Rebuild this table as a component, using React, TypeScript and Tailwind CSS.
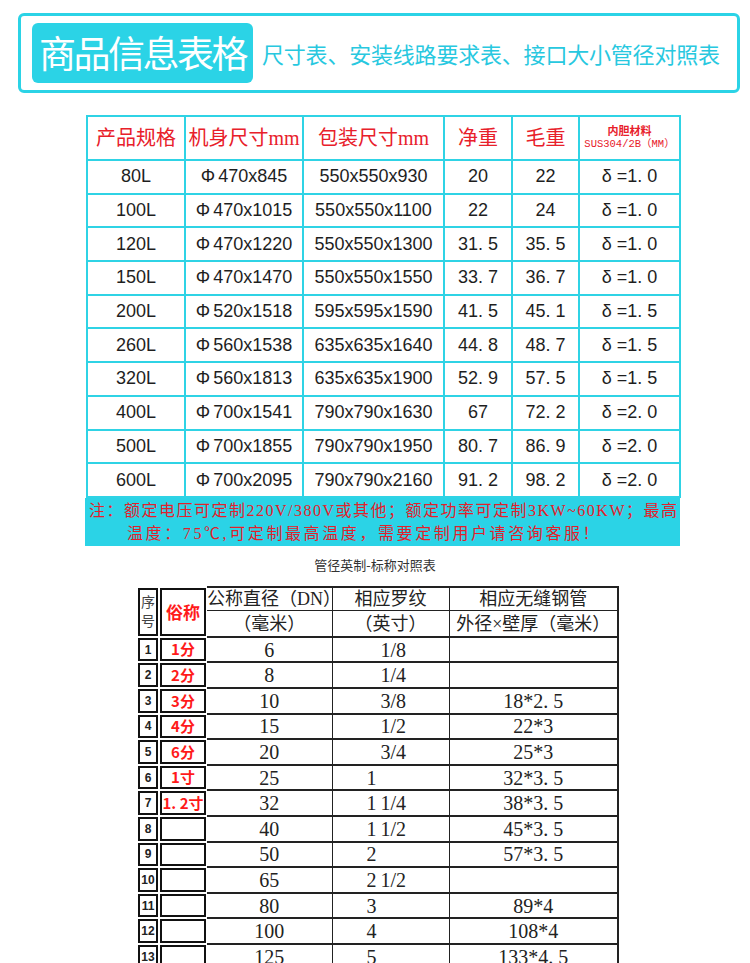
import React from 'react';

const specRows = [
  ['80L', 'Φ470x845', '550x550x930', '20', '22', 'δ =1. 0'],
  ['100L', 'Φ470x1015', '550x550x1100', '22', '24', 'δ =1. 0'],
  ['120L', 'Φ470x1220', '550x550x1300', '31. 5', '35. 5', 'δ =1. 0'],
  ['150L', 'Φ470x1470', '550x550x1550', '33. 7', '36. 7', 'δ =1. 0'],
  ['200L', 'Φ520x1518', '595x595x1590', '41. 5', '45. 1', 'δ =1. 5'],
  ['260L', 'Φ560x1538', '635x635x1640', '44. 8', '48. 7', 'δ =1. 5'],
  ['320L', 'Φ560x1813', '635x635x1900', '52. 9', '57. 5', 'δ =1. 5'],
  ['400L', 'Φ700x1541', '790x790x1630', '67', '72. 2', 'δ =2. 0'],
  ['500L', 'Φ700x1855', '790x790x1950', '80. 7', '86. 9', 'δ =2. 0'],
  ['600L', 'Φ700x2095', '790x790x2160', '91. 2', '98. 2', 'δ =2. 0'],
];

// [no, nickname, DN, inch (int part), inch (fraction), seamless pipe]
const pipeRows = [
  ['1', '1分', '6', '', '1/8', ''],
  ['2', '2分', '8', '', '1/4', ''],
  ['3', '3分', '10', '', '3/8', '18*2. 5'],
  ['4', '4分', '15', '', '1/2', '22*3'],
  ['5', '6分', '20', '', '3/4', '25*3'],
  ['6', '1寸', '25', '1', '', '32*3. 5'],
  ['7', '1. 2寸', '32', '1', '1/4', '38*3. 5'],
  ['8', '', '40', '1', '1/2', '45*3. 5'],
  ['9', '', '50', '2', '', '57*3. 5'],
  ['10', '', '65', '2', '1/2', ''],
  ['11', '', '80', '3', '', '89*4'],
  ['12', '', '100', '4', '', '108*4'],
  ['13', '', '125', '5', '', '133*4. 5'],
];

const sans = { fontFamily: '"Liberation Sans", "Noto Sans CJK SC", sans-serif' };
const serif = { fontFamily: '"Liberation Serif", "Noto Sans CJK SC", serif' };

const boxCell =
  'border-0 p-0 shadow-[inset_0_0_0_1px_#fff,inset_0_0_0_3px_#111] text-center';

export default function App() {
  return (
    <div className="w-[750px] h-[963px] overflow-hidden bg-white" style={sans}>
      {/* header banner */}
      <div className="ml-[18px] mt-[13px] w-[722px] h-[80px] border-[3px] border-[#2bd3e6] rounded-[6px] flex items-center">
        <div
          className="ml-[11px] w-[221px] h-[60px] bg-[#2bd3e6] rounded-[6px] flex items-center justify-center text-white text-[37px] tracking-[-2.5px]"
          style={{ fontFamily: '"Noto Sans CJK SC", sans-serif' }}
        >
          商品信息表格
        </div>
        <div
          className="ml-[9px] text-[22px] tracking-[-0.2px] text-[#28c8df]"
          style={{ fontFamily: '"Noto Sans CJK SC", sans-serif' }}
        >
          尺寸表、安装线路要求表、接口大小管径对照表
        </div>
      </div>

      {/* spec table */}
      <table className="ml-[86px] mt-[22px] w-[593px] table-fixed border-collapse">
        <colgroup>
          <col className="w-[98px]" />
          <col className="w-[118px]" />
          <col className="w-[141px]" />
          <col className="w-[68px]" />
          <col className="w-[67px]" />
          <col className="w-[101px]" />
        </colgroup>
        <thead>
          <tr className="h-[44px] text-[#e8202a] text-[20px]" style={serif}>
            <th className="border-2 border-[#2fd3e5] font-normal">产品规格</th>
            <th className="border-2 border-[#2fd3e5] font-normal whitespace-nowrap">机身尺寸mm</th>
            <th className="border-2 border-[#2fd3e5] font-normal whitespace-nowrap">包装尺寸mm</th>
            <th className="border-2 border-[#2fd3e5] font-normal">净重</th>
            <th className="border-2 border-[#2fd3e5] font-normal">毛重</th>
            <th className="border-2 border-[#2fd3e5] font-normal leading-[13px]">
              <div className="text-[11px] font-bold">内胆材料</div>
              <div
                className="text-[10.5px] whitespace-nowrap"
                style={{ fontFamily: '"Liberation Mono", "Noto Sans CJK SC", monospace' }}
              >
                SUS304/2B（MM）
              </div>
            </th>
          </tr>
        </thead>
        <tbody>
          {specRows.map((r) => (
            <tr key={r[0]} className="h-[33.7px] text-[18px] text-[#1e1e1e]">
              {r.map((c, i) => (
                <td key={i} className="border-2 border-[#2fd3e5] text-center p-0 whitespace-nowrap">
                  {i === 1 ? (
                    <span>
                      Φ<span className="ml-[3px]">{c.slice(1)}</span>
                    </span>
                  ) : (
                    c
                  )}
                </td>
              ))}
            </tr>
          ))}
        </tbody>
      </table>

      {/* note */}
      <div
        className="ml-[85px] w-[595px] h-[48px] bg-[#2bd3e6] text-[#e3202b] text-[16px] leading-[23px] pl-[4px] pt-[1px]"
        style={serif}
      >
        <div className="whitespace-nowrap tracking-[1.5px]">
          注：额定电压可定制220V/380V或其他；额定功率可定制3KW~60KW；最高
        </div>
        <div className="whitespace-nowrap pl-[38px] tracking-[2.6px]">
          温度：75℃,可定制最高温度，需要定制用户请咨询客服！
        </div>
      </div>

      {/* pipe table title */}
      <div className="mt-[12px] w-[750px] text-center text-[13px] leading-[16px] text-[#333]" style={serif}>
        管径英制-标称对照表
      </div>

      {/* pipe table */}
      <table className="ml-[137px] mt-[12px] w-[481px] table-fixed border-collapse text-[#222]" style={serif}>
        <colgroup>
          <col className="w-[22px]" />
          <col className="w-[48px]" />
          <col className="w-[125px]" />
          <col className="w-[117px]" />
          <col className="w-[169px]" />
        </colgroup>
        <thead>
          <tr className="h-[24px]">
            <td rowSpan={2} className={`${boxCell} text-[14px] leading-[19px] text-[#444]`}>
              <div>序</div>
              <div>号</div>
            </td>
            <td
              rowSpan={2}
              className={`${boxCell} text-[17px] font-bold text-[#ff1a1a]`}
              style={{ fontFamily: '"Noto Sans CJK SC", sans-serif' }}
            >
              俗称
            </td>
            <td className="border-t-2 border-b border-r border-[#222] text-center text-[18px] leading-[22px] p-0 whitespace-nowrap">
              公称直径（DN）
            </td>
            <td className="border-t-2 border-b border-r border-[#222] text-center text-[18px] leading-[22px] p-0">
              相应罗纹
            </td>
            <td className="border-t-2 border-b border-r-2 border-[#222] text-center text-[18px] leading-[22px] p-0">
              相应无缝钢管
            </td>
          </tr>
          <tr className="h-[26px]">
            <td className="border-b-2 border-r border-[#222] text-center text-[18px] leading-[22px] p-0">（毫米）</td>
            <td className="border-b-2 border-r border-[#222] text-center text-[18px] leading-[22px] p-0">（英寸）</td>
            <td className="border-b-2 border-r-2 border-[#222] text-center text-[18px] leading-[22px] p-0 whitespace-nowrap">
              外径×壁厚（毫米）
            </td>
          </tr>
        </thead>
        <tbody>
          {pipeRows.map((r) => (
            <tr key={r[0]} className="h-[25.6px]">
              <td className={`${boxCell} text-[12px] font-bold`} style={sans}>
                {r[0]}
              </td>
              <td
                className={`${boxCell} text-[15px] font-bold text-[#ff1a1a] whitespace-nowrap`}
                style={{ fontFamily: '"Noto Sans CJK SC", sans-serif' }}
              >
                {r[1]}
              </td>
              <td className="border-b-2 border-r border-[#222] text-center text-[20px] leading-[22px] p-0">{r[2]}</td>
              <td className="border-b-2 border-r border-[#222] text-left text-[20px] leading-[22px] p-0 pl-[34px] whitespace-nowrap">
                <span className="inline-block w-[14px]">{r[3]}</span>
                {r[4]}
              </td>
              <td className="border-b-2 border-r-2 border-[#222] text-center text-[20px] leading-[22px] p-0 whitespace-nowrap">
                {r[5]}
              </td>
            </tr>
          ))}
        </tbody>
      </table>
    </div>
  );
}
